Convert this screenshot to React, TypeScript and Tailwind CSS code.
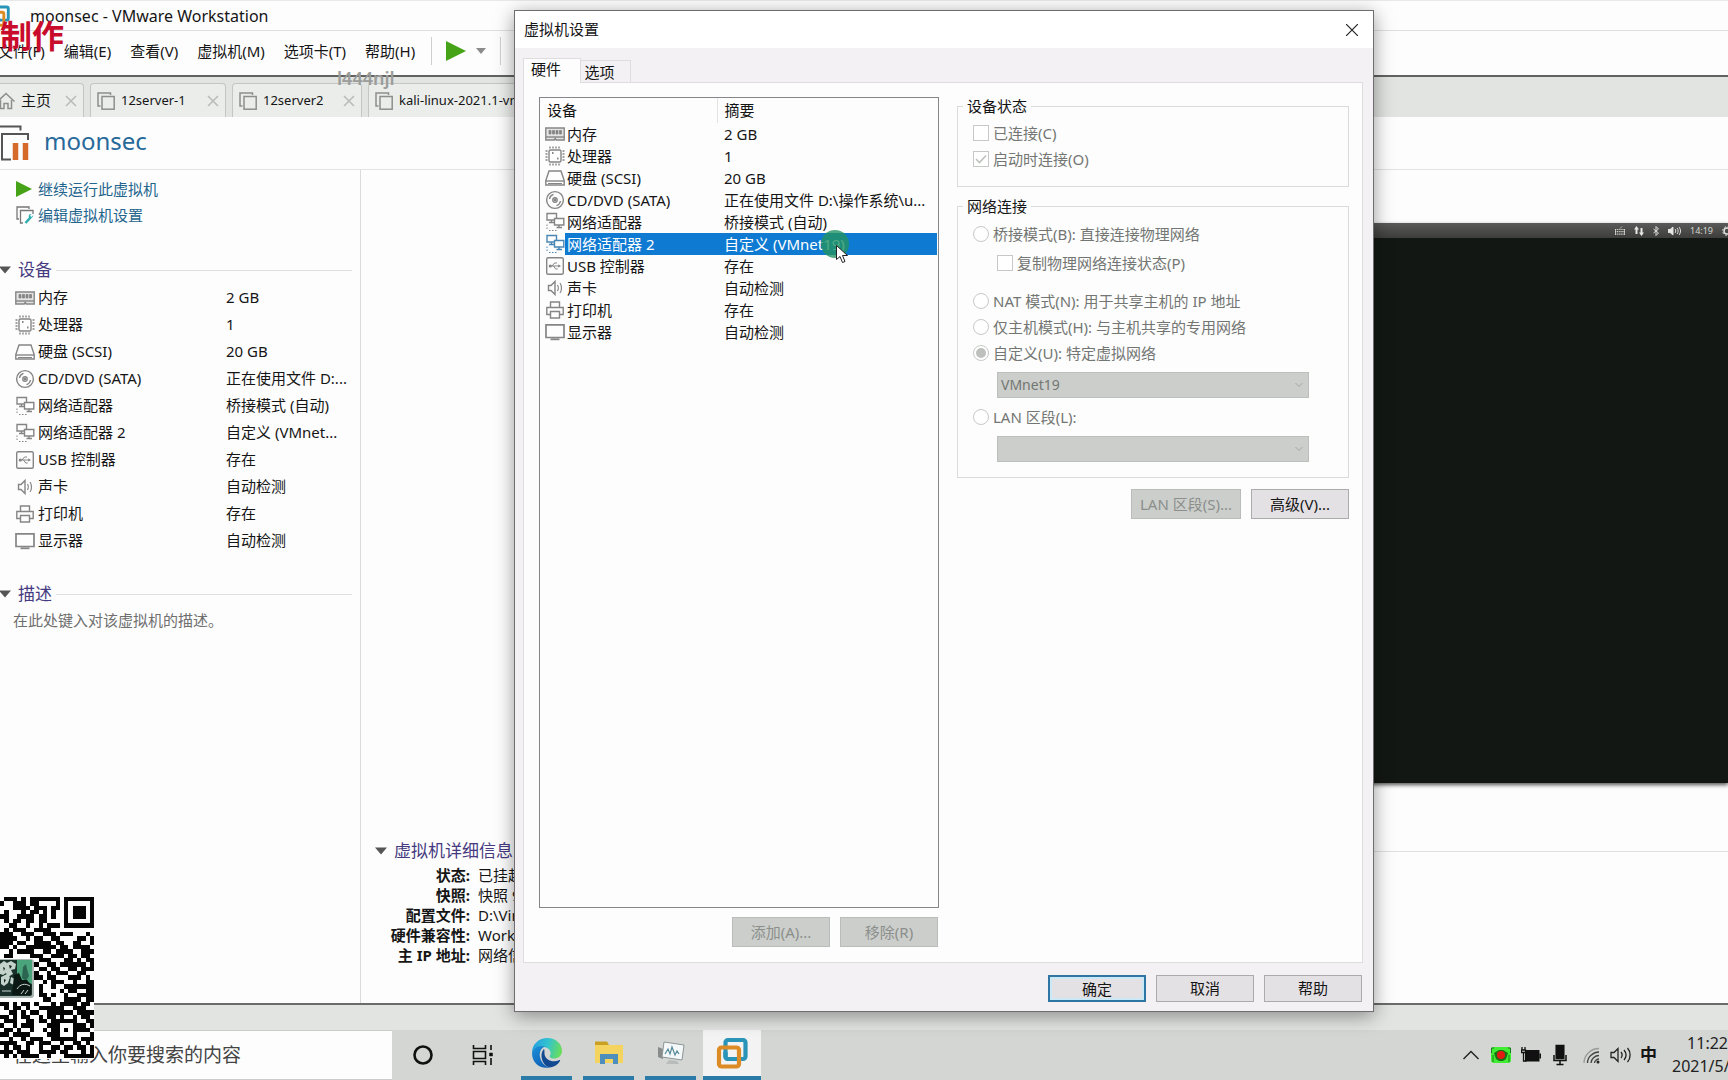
import type { ReactNode } from "react";

const UI = "font-['Noto_Sans','Noto_Sans_CJK_SC',sans-serif]";

type IconName = "memory" | "cpu" | "disk" | "cd" | "net" | "usb" | "sound" | "printer" | "display";

function DeviceIcon({ name, active = false }: { name: IconName; active?: boolean }) {
  const s = active ? "#4a86b4" : "#858585";
  const shapes: Record<IconName, ReactNode> = {
    memory: (
      <>
        <path d="M.8 4h18.4v12h-8l-1-1.5-1 1.5H.8z" fill="#e4e4e4" />
        <path d="M4 6.500h2v3.500H4zM7.500 6.500h2v3.500h-2zM11 6.500h2v3.500h-2zM14.500 6.500h2v3.500h-2z" fill={s} strokeWidth=".8" />
        <path d="M1 13h18" />
      </>
    ),
    cpu: (
      <>
        <rect x="4" y="4" width="12" height="12" rx="1.500" />
        <path d="M5 .5v2M8 .5v2M11 .5v2M14 .5v2M5 17.500v2M8 17.500v2M11 17.500v2M14 17.500v2M.5 5h2M.5 8h2M.5 11h2M.5 14h2M17.500 5h2M17.500 8h2M17.500 11h2M17.500 14h2" />
        <path d="M7 7h1.500M12 12.500h1.500" strokeWidth="2" />
      </>
    ),
    disk: (
      <>
        <path d="M4 3h12l3.200 9.500V17H.8v-4.500z" />
        <path d="M1 13h18" />
        <path d="M3 15.500h14" strokeWidth="1" />
      </>
    ),
    cd: (
      <>
        <circle cx="10" cy="10" r="8.400" />
        <circle cx="10" cy="10" r="2.200" />
        <circle cx="10" cy="10" r=".6" fill={s} />
        <path d="M4.500 9c.4-2.300 1.900-4 4-4.600M15.500 11c-.4 2.300-1.900 4-4 4.600" />
      </>
    ),
    net: (
      <>
        <path d="M2 1.500h9.500v6.500H2zM4 10.500h5M6.500 8v2.500" />
        <path d="M9.500 6.500h9.300v6.500H9.500z" fill="#fff" />
        <path d="M11.500 15.500h5.500M14 13v2.500" />
        <path d="M2 12.500v6M4 18.500h9" strokeDasharray="1.500 1.500" strokeWidth="1" />
      </>
    ),
    usb: (
      <>
        <rect x="1.700" y="1.700" width="16.600" height="16.600" rx="1.500" />
        <path d="M5 10h10M7 10l2.500-3H12M8.500 10l2.200 3h2" strokeWidth="1" />
        <circle cx="5.300" cy="10" r=".9" fill={s} />
        <path d="M13.500 8.800L15.500 10l-2 1.200z" fill={s} strokeWidth=".5" />
      </>
    ),
    sound: (
      <>
        <path d="M3.500 7.500H6L10 3.500v13L6 12.500H3.500z" />
        <path d="M12.500 7c1 1.500 1 4.500 0 6M15 5c2 2.500 2 7.500 0 10" strokeWidth="1.200" />
      </>
    ),
    printer: (
      <>
        <path d="M5.500 7.500V2h9v5.500M5 14.500H1.800v-7h16.400v7H15" />
        <path d="M5.500 11.500h9v6.500h-9z" />
      </>
    ),
    display: (
      <>
        <path d="M1 2.800h18v12.700H1z" strokeWidth="1.700" />
        <path d="M5.500 17.300h9" strokeWidth="1.800" />
      </>
    ),
  };
  return (
    <svg viewBox="0 0 20 20" className="size-5 shrink-0" fill="none" stroke={s} strokeWidth="1.4" aria-hidden="true">
      {shapes[name]}
    </svg>
  );
}

const devices: { icon: IconName; name: string; short: string; full: string }[] = [
  { icon: "memory", name: "内存", short: "2 GB", full: "2 GB" },
  { icon: "cpu", name: "处理器", short: "1", full: "1" },
  { icon: "disk", name: "硬盘 (SCSI)", short: "20 GB", full: "20 GB" },
  { icon: "cd", name: "CD/DVD (SATA)", short: "正在使用文件 D:...", full: "正在使用文件 D:\\操作系统\\u..." },
  { icon: "net", name: "网络适配器", short: "桥接模式 (自动)", full: "桥接模式 (自动)" },
  { icon: "net", name: "网络适配器 2", short: "自定义 (VMnet...", full: "自定义 (VMnet19)" },
  { icon: "usb", name: "USB 控制器", short: "存在", full: "存在" },
  { icon: "sound", name: "声卡", short: "自动检测", full: "自动检测" },
  { icon: "printer", name: "打印机", short: "存在", full: "存在" },
  { icon: "display", name: "显示器", short: "自动检测", full: "自动检测" },
];

function VmwareLogo({ className }: { className: string }) {
  return (
    <svg viewBox="0 0 32 32" className={className} fill="none" strokeWidth="4.200" aria-hidden="true">
      <rect x="9.500" y="3" width="20" height="19" rx="2.500" stroke="#2a93b8" />
      <rect x="3" y="10.500" width="20" height="19" rx="2.500" stroke="#dd8c25" />
      <path d="M9.500 15v4.500a2.500 2.500 0 0 0 2.500 2.500h6" stroke="#2a93b8" />
    </svg>
  );
}

function Caret() {
  return (
    <svg viewBox="0 0 12 8" className="h-2 w-3 shrink-0" aria-hidden="true">
      <path d="M0 .5h12L6 7.500z" fill="#555" />
    </svg>
  );
}

function VmTabIcon() {
  return (
    <svg viewBox="0 0 18 18" className="size-[18px] shrink-0" fill="none" stroke="#8d8f8d" strokeWidth="1.500" aria-hidden="true">
      <path d="M13.500 3V1H1v13h2.500" />
      <rect x="5" y="4.500" width="12.200" height="12.700" />
    </svg>
  );
}

function WindowTab({ label, className, textClass = "text-[13px]", close = true, icon }: { label: string; className: string; textClass?: string; close?: boolean; icon?: ReactNode }) {
  return (
    <div className={`flex h-[34px] shrink-0 items-center rounded-t-sm border border-b-0 border-[#c3c6c3] bg-[#ebedeb] ${className}`}>
      {icon ?? <VmTabIcon />}
      <button type="button" className={`ml-1.5 whitespace-nowrap ${textClass}`}>{label}</button>
      {close && (
        <button type="button" aria-label={`关闭 ${label}`} className="ml-auto">
          <svg viewBox="0 0 12 12" className="size-3" stroke="#b9bbb9" strokeWidth="1.500"><path d="M1 1l10 10M11 1L1 11" /></svg>
        </button>
      )}
    </div>
  );
}

function SectionTitle({ children }: { children: ReactNode }) {
  return (
    <div className="flex h-7 items-center">
      <Caret />
      <h2 className="ml-[7px] text-[17px] whitespace-nowrap text-[#453a80]">{children}</h2>
      <div className="ml-1 h-px flex-1 bg-[#dfe0df]" />
    </div>
  );
}

function DeviceSidebar() {
  return (
    <aside className="flex w-[361px] shrink-0 flex-col border-r border-[#d9dbd9] pt-1.5 text-[15px]">
      <a href="#resume" className="flex h-[26px] items-center pl-4 text-[#24658d]">
        <svg viewBox="0 0 16 16" className="mr-1.5 size-4"><path d="M0 0l16 8-16 8z" fill="#46a317" /></svg>
        继续运行此虚拟机
      </a>
      <a href="#edit" className="flex h-[26px] items-center pl-4 text-[#24658d]">
        <svg viewBox="0 0 18 18" className="mr-1 size-[18px]" fill="none" stroke="#777" strokeWidth="1.300">
          <path d="M13 3V1H1v12h2M7 17H4.500V4.500H17V8" />
          <path d="M9.500 17l5-5.500" stroke="#2eaeb0" strokeWidth="2.600" />
          <path d="M17.500 9l-2 2-1.500-1.500 1.500-1.500c-2-.5-3.500 1.500-2.500 3.500 1.500 1.500 4 .5 4.500-2.500z" fill="#2eaeb0" stroke="none" />
        </svg>
        编辑虚拟机设置
      </a>
      <div className="-ml-px mt-7 pr-2"><SectionTitle>设备</SectionTitle></div>
      <dl>
        {devices.map((d, i) => (
          <div key={i} className="flex h-[27px] items-center pl-[15px]">
            <dt className="flex w-[211px] items-center gap-[3px] whitespace-nowrap"><DeviceIcon name={d.icon} />{d.name}</dt>
            <dd className="whitespace-nowrap">{d.short}</dd>
          </div>
        ))}
      </dl>
      <div className="-ml-px mt-[26px] pr-2"><SectionTitle>描述</SectionTitle></div>
      <p className="pl-[13px] text-[15px]/6 text-[#6f6f6f]">在此处键入对该虚拟机的描述。</p>
    </aside>
  );
}

const details = [
  ["状态:", "已挂起"],
  ["快照:", "快照 9"],
  ["配置文件:", "D:\\Virtual"],
  ["硬件兼容性:", "Workstation"],
  ["主 IP 地址:", "网络信息"],
];

function GuestPreview() {
  return (
    <div className="ml-auto flex h-[560px] w-[360px] flex-col bg-[#131713] shadow-[0_2px_4px_#555]">
      <div className="flex h-[15px] items-center justify-end gap-[9px] overflow-hidden bg-linear-to-b from-[#5a5a5a] to-[#3d3d3b] text-[9px] text-[#d5d5d0]">
        <svg viewBox="0 0 10 9" className="h-[9px] w-[10px]" fill="none" stroke="#d5d5d0" strokeWidth="1.200"><path d="M0 3.500h10M0 5.700h10M0 8.200h10" strokeDasharray="1.300 .8" /><path d="M.5 3v6M9.500 3v6M5 2.500L7 .5" strokeWidth=".8" /></svg>
        <svg viewBox="0 0 10 10" className="size-[10px]" fill="#e8e8e4"><path d="M0 3.500L2.500 0 5 3.500H3.500V8h-2V3.500zM5 6.500L7.500 10 10 6.500H8.500V2h-2v4.500z" /></svg>
        <svg viewBox="0 0 6 10" className="h-[10px] w-[6px]" fill="none" stroke="#e0e0dc"><path d="M.5 3l5 4L3 9.500v-9L5.500 3l-5 4" /></svg>
        <svg viewBox="0 0 13 10" className="h-[10px] w-[13px]" fill="none" stroke="#e0e0dc"><path d="M0 3.500h2L5 1v8L2 6.500H0z" fill="#e8e8e4" /><path d="M7 3c1 1 1 3 0 4M9 2c1.500 2 1.500 4 0 6M11 1c2 2.500 2 5.500 0 8" /></svg>
        <span>14:19</span>
        <svg viewBox="0 0 10 10" className="-mr-1 size-[10px]" fill="none" stroke="#e0e0dc"><circle cx="5" cy="5" r="3" strokeWidth="1.500" /><circle cx="5" cy="5" r="4.400" strokeDasharray="1.500 2" /></svg>
      </div>
    </div>
  );
}

function VmDetails() {
  return (
    <section className="flex min-w-0 flex-1 flex-col overflow-hidden pt-[53px]">
      <GuestPreview />
      <div className="mt-[54px] pl-[14px]"><SectionTitle>虚拟机详细信息</SectionTitle></div>
      <dl className="text-[15px]/5">
        {details.map(([k, v]) => (
          <div key={k} className="flex gap-2">
            <dt className="w-[109px] text-right font-bold whitespace-nowrap">{k}</dt>
            <dd>{v}</dd>
          </div>
        ))}
      </dl>
    </section>
  );
}

const menus = ["文件(F)", "编辑(E)", "查看(V)", "虚拟机(M)", "选项卡(T)", "帮助(H)"];

function Workstation() {
  return (
    <div className="flex flex-1 flex-col bg-[#fdfdfd]">
      <header className="flex h-[31px] items-center border-t border-b border-[#dfe1df] border-t-[#e8e8e8] text-base">
        <VmwareLogo className="-ml-3 size-[22px]" />
        <h1 className="ml-5 text-base">moonsec - VMware Workstation</h1>
      </header>
      <nav className="flex h-[46px] items-center border-b-2 border-[#616361] pb-1 text-[15px]">
        <div className="-ml-0.5 flex gap-[19px]">
          {menus.map((m) => <button type="button" key={m} className="whitespace-nowrap">{m}</button>)}
        </div>
        <div className="ml-4 flex h-7 items-center border-x border-[#cfcfcf] px-[14px]">
          <button type="button" aria-label="运行"><svg viewBox="0 0 20 20" className="size-5"><path d="M0 0l20 10L0 20z" fill="#46a317" /></svg></button>
          <button type="button" aria-label="电源选项" className="ml-2.5"><svg viewBox="0 0 10 6" className="h-1.5 w-2.5"><path d="M0 0h10L5 6z" fill="#8b8b8b" /></svg></button>
        </div>
      </nav>
      <div className="flex h-10 items-end gap-1.5 overflow-hidden bg-[#e1e4e1]">
        <WindowTab
          label="主页"
          className="-ml-1 w-[88px] pr-1.5"
          textClass="text-[15px]"
          icon={<svg viewBox="0 0 18 18" className="size-[18px] shrink-0" fill="none" stroke="#8d8f8d" strokeWidth="1.500"><path d="M.5 9.500L9 1.500l8.500 8M3.500 8v8.500H7v-5h4v5h3.500V8" /></svg>}
        />
        <WindowTab label="12server-1" className="w-[136px] px-1.5" />
        <WindowTab label="12server2" className="w-[130px] px-1.5" />
        <WindowTab label="kali-linux-2021.1-vmware-amd64" className="w-[260px] px-1.5" />
      </div>
      <div className="flex h-[53px] items-center border-b border-[#e2e4e2]">
        <svg viewBox="0 0 30 36" className="h-9 w-[30px]" fill="none" stroke="#555" strokeWidth="2">
          <path d="M0 1.500h20.500v4M11 34.500H2V9h26v6" />
          <path d="M15.500 18v17M25.500 18v17" stroke="#d56a2b" strokeWidth="5.500" />
        </svg>
        <h2 className="ml-3.5 pb-1 text-2xl text-[#27699a]">moonsec</h2>
      </div>
      <div className="flex flex-1 border-b-2 border-[#6a6b6a]">
        <DeviceSidebar />
        <VmDetails />
      </div>
      <footer className="h-[25px] bg-[#e2e4e2]" />
    </div>
  );
}

const dialogButton = "h-[27px] w-[98px] border border-[#ababab] bg-[#e4e1e4] text-[15px] whitespace-nowrap";
const disabledButton = "h-[30px] border border-[#b9bdb9] bg-[#cbcecb] text-[15px] whitespace-nowrap text-[#8b8e8b]";

function Choice({ type, label, checked = false, className }: { type: "radio" | "checkbox"; label: string; checked?: boolean; className: string }) {
  return (
    <label className={`flex items-center gap-1 text-[15px] whitespace-nowrap text-[#737673] ${className}`}>
      <span className="relative flex size-4 shrink-0">
        <input
          type={type}
          name={type === "radio" ? "network" : undefined}
          disabled
          defaultChecked={checked}
          className={`size-4 appearance-none border border-[#c6c9c6] bg-white ${type === "radio" ? "rounded-full" : ""}`}
        />
        {checked && type === "radio" && <span className="absolute inset-[3px] rounded-full bg-[#bdc0bd]" />}
        {checked && type === "checkbox" && (
          <svg viewBox="0 0 16 16" className="absolute inset-0" fill="none" stroke="#bdc0bd" strokeWidth="1.600"><path d="M3 8l3.500 3.500L13 4.500" /></svg>
        )}
      </span>
      {label}
    </label>
  );
}

function DisabledSelect({ label, value }: { label: string; value: string }) {
  return (
    <div className="relative mr-6 ml-6 h-[26px]">
      <select disabled aria-label={label} className="size-full appearance-none border border-[#bcc0bc] bg-[#cbcecb] px-[3px] text-sm text-[#737673] opacity-100">
        <option>{value}</option>
      </select>
      <svg viewBox="0 0 8 6" className="absolute top-2.5 right-1.5 h-1.5 w-2" fill="none" stroke="#a3a6a3"><path d="M.5 1L4 4.500 7.500 1" /></svg>
    </div>
  );
}

function DeviceTable() {
  return (
    <div className="flex-1 border border-[#84868a] bg-[#fdfdfd]">
      <table className="w-full table-fixed text-[15px]">
        <thead>
          <tr className="h-[25px] text-left">
            <th className="w-[177px] border-r border-[#e2e4e2] p-0 pl-[7px] font-normal">设备</th>
            <th className="p-0 pl-[7px] font-normal">摘要</th>
          </tr>
        </thead>
        <tbody>
          {devices.map((d, i) => {
            const active = i === 5;
            return (
              <tr key={i} className={`h-[22px] ${active ? "text-white" : ""}`}>
                <td className="p-0">
                  <div className="flex h-[22px] items-center pl-[5px]">
                    <DeviceIcon name={d.icon} active={active} />
                    <span className={`flex h-[22px] flex-1 items-center pl-0.5 whitespace-nowrap ${active ? "bg-[#0f7ad2]" : ""}`}>{d.name}</span>
                  </div>
                </td>
                <td className="p-0 pr-px">
                  <div className={`relative flex h-[22px] items-center pl-[7px] whitespace-nowrap ${active ? "bg-[#0f7ad2]" : ""}`}>
                    {d.full}
                    {active && (
                      <>
                        <span className="absolute top-[-3px] left-[104px] size-7 rounded-full bg-[#239463]/80" />
                        <svg viewBox="0 0 14 20" className="absolute top-3 left-[119px] h-5 w-3.5"><path d="M.5.5v14l3.500-3 2.500 6 2.500-1-2.500-6h5z" fill="#fff" stroke="#222" /></svg>
                      </>
                    )}
                  </div>
                </td>
              </tr>
            );
          })}
        </tbody>
      </table>
    </div>
  );
}

function Group({ title, className, children }: { title: string; className: string; children: ReactNode }) {
  return (
    <fieldset className={`border border-[#dadcda] px-[15px] ${className}`}>
      <legend className="-ml-2.5 px-1 text-[15px]/5">{title}</legend>
      {children}
    </fieldset>
  );
}

function SettingsDialog() {
  return (
    <div role="dialog" aria-label="虚拟机设置" className="absolute top-2.5 bottom-[68px] left-[514px] flex w-[860px] flex-col border border-[#6f6d70] bg-[#f4f1f4] shadow-[0_4px_18px_rgba(0,0,0,0.4)]">
      <div className="flex h-[37px] shrink-0 items-center bg-white pr-[15px] pl-[9px] text-[15px]">
        <h2>虚拟机设置</h2>
        <button type="button" aria-label="关闭" className="ml-auto"><svg viewBox="0 0 12 12" className="size-3" stroke="#222" strokeWidth="1.200"><path d="M0 0l12 12M12 0L0 12" /></svg></button>
      </div>
      <div role="tablist" className="mt-2.5 flex h-6 items-end pl-2 text-[15px]">
        <button type="button" role="tab" aria-selected="true" className="z-10 -mb-px h-[25px] w-[58px] border border-b-0 border-[#dedcde] bg-[#fdfdfd] pr-3 pb-1 leading-5">硬件</button>
        <button type="button" role="tab" aria-selected="false" className="h-[22px] w-[50px] border border-b-0 border-l-0 border-[#dedcde] pr-3 leading-5">选项</button>
      </div>
      <div className="mr-[10px] ml-2 flex flex-1 border border-[#dedcde] bg-[#fdfdfd] pr-[13px] pl-[15px]">
        <div className="flex w-[400px] shrink-0 flex-col pt-3.5 pb-[15px]">
          <DeviceTable />
          <div className="mt-[9px] flex justify-end gap-2.5 pr-px">
            <button type="button" disabled className={`w-[98px] ${disabledButton}`}>添加(A)...</button>
            <button type="button" disabled className={`w-[98px] ${disabledButton}`}>移除(R)</button>
          </div>
        </div>
        <div className="ml-[18px] flex flex-1 flex-col pt-[13px]">
          <Group title="设备状态" className="h-[91px]">
            <Choice type="checkbox" label="已连接(C)" className="mt-1 h-[26px]" />
            <Choice type="checkbox" label="启动时连接(O)" checked className="h-[26px]" />
          </Group>
          <Group title="网络连接" className="mt-[9px] h-[282px]">
            <Choice type="radio" label="桥接模式(B): 直接连接物理网络" className="mt-[5px] h-[26px]" />
            <Choice type="checkbox" label="复制物理网络连接状态(P)" className="mt-[3px] ml-6 h-[26px]" />
            <Choice type="radio" label="NAT 模式(N): 用于共享主机的 IP 地址" className="mt-3 h-[26px]" />
            <Choice type="radio" label="仅主机模式(H): 与主机共享的专用网络" className="h-[26px]" />
            <Choice type="radio" label="自定义(U): 特定虚拟网络" checked className="mb-1.5 h-[26px]" />
            <DisabledSelect label="自定义网络" value="VMnet19" />
            <Choice type="radio" label="LAN 区段(L):" className="my-1.5 h-[26px]" />
            <DisabledSelect label="LAN 区段" value="" />
          </Group>
          <div className="mt-[11px] flex justify-end gap-2.5">
            <button type="button" disabled className={`w-[110px] ${disabledButton}`}>LAN 区段(S)...</button>
            <button type="button" className="h-[30px] w-[98px] border border-[#ababab] bg-[#e4e1e4] text-[15px]">高级(V)...</button>
          </div>
        </div>
      </div>
      <div className="flex justify-end gap-2.5 pt-3 pr-[11px] pb-[9px]">
        <button type="button" className="h-[27px] w-[98px] border-2 border-[#2f76a5] bg-[#e4e1e4] text-[15px] leading-5 inset-ring-2 inset-ring-[#cbe8f7]">确定</button>
        <button type="button" className={dialogButton}>取消</button>
        <button type="button" className={dialogButton}>帮助</button>
      </div>
    </div>
  );
}

const qrRows = [
  "0111010111111101111111",
  "1001110110000101000001",
  "0001111011101101011101",
  "0100010110101001011101",
  "1100111101101001011101",
  "0101101101100001000001",
  "0011001001011101111111",
  "0101110011110000000000",
  "1110011100111011100010",
  "1111001011001100001101",
  "1110110011110110011001",
  "1101001111111011011110",
  "0010111100110111100111",
  "0110000111001110110110",
  "0000000001110001101011",
  "0000000010011011111101",
  "0000000001101100110111",
  "0000000010010111001100",
  "0000000011011000111010",
  "0000000000101110010011",
  "0000000001001001111111",
  "0000000001000010110011",
  "0000000001101001001111",
  "0000000000110001111011",
  "1101011010001011110110",
  "0101101001111110011100",
  "0011010110011111101111",
  "1101011001011010010110",
  "0111001101101111110011",
  "1001011100011100011101",
  "0110100100101101011110",
  "1101111000011100010001",
  "0010010111001111110111",
  "1111001101110010011010",
  "0101101001001101101101",
  "1110111001111011000101",
  "0101011110010001111111",
];

const qrPath = qrRows
  .map((row, y) => row.split("").map((bit, x) => (bit === "1" ? `M${x} ${y}h1v1h-1z` : "")).join(""))
  .join("");

function QrCode() {
  return (
    <svg viewBox="0 0 94 162" className="pointer-events-none absolute bottom-[21px] left-0 z-20 h-[162px] w-[94px]" role="img" aria-label="QR">
      <rect width="94" height="162" fill="#fff" />
      <g transform="scale(4.28 4.36)"><path d={qrPath} fill="#050505" shapeRendering="crispEdges" /></g>
      <rect x="-4" y="62" width="38" height="39" rx="3" fill="#a9b5b0" />
      <rect x="-4" y="63" width="36" height="36" rx="2" fill="#19302a" />
      <path d="M17 63h15v24l-6-2-4 2-5-8z" fill="#4ba37c" />
      <path d="M23 70l3-3 1 5 2 7-3 5-4-3z" fill="#2b6450" />
      <path d="M0 67l4-3 3 2 4-2 5 3-1 5-4 1 2 4-5 3-2-4-3 2-3-1zM1 80l6-3 3 3-2 6-4 3-3-2zM11 80l4 2-1 6-4-2z" fill="#c3d3cb" />
      <path d="M3 70l2 1-1 3zM9 68l3 1-2 3zM4 82l2 1-2 3z" fill="#10201b" />
      <path d="M14 78l5-2 3 7 5 0 4 5v10H12z" fill="#0a1713" />
      <path d="M17 92c3-5 8-6 13-3M2 94h9M21 97l3-4M25 97l3-4" stroke="#c9d8d0" fill="none" />
    </svg>
  );
}

function TaskButton({ label, children, active = false }: { label: string; children: ReactNode; active?: boolean }) {
  return (
    <button
      type="button"
      aria-label={label}
      className={`flex h-full items-center justify-center border-b-4 border-[#2b7ba8] ${active ? "w-[58px] bg-[#f2f3f2]" : "w-[51px]"}`}
    >
      {children}
    </button>
  );
}

function Taskbar() {
  return (
    <footer className="flex h-[50px] shrink-0 overflow-hidden bg-[#d3d6d3]">
      <input
        type="text"
        aria-label="搜索"
        placeholder="在这里输入你要搜索的内容"
        className="w-[392px] shrink-0 border-y border-[#c9ccc9] bg-[#fdfdfd] pl-[13px] text-[19px] placeholder:text-[#444] placeholder:opacity-100"
      />
      <button type="button" aria-label="Cortana" className="ml-5 w-[22px]"><svg viewBox="0 0 22 22" className="size-[22px]"><circle cx="11" cy="11" r="8.500" fill="none" stroke="#111" strokeWidth="2.600" /></svg></button>
      <button type="button" aria-label="任务视图" className="ml-[38px] w-[22px]">
        <svg viewBox="0 0 22 20" className="h-5 w-[22px]" fill="none" stroke="#111" strokeWidth="1.600"><path d="M1.500 0v3.500h12V0M1.500 20v-3.500h12V20M1.500 6.500h12v7h-12zM19 0v5M19 13v7" /><path d="M17.500 8h3v3h-3z" fill="#111" strokeWidth=".5" /></svg>
      </button>
      <div className="ml-[27px] flex gap-[11px]">
        <TaskButton label="Edge">
          <svg viewBox="0 0 32 32" className="size-8">
            <defs>
              <linearGradient id="edge-top" x1="0" y1=".3" x2="1" y2=".5"><stop stopColor="#259de0" /><stop offset=".5" stopColor="#33c3cf" /><stop offset="1" stopColor="#6ade59" /></linearGradient>
              <linearGradient id="edge-side" x1="0" y1="0" x2=".5" y2="1"><stop stopColor="#1b91d9" /><stop offset="1" stopColor="#1063b8" /></linearGradient>
            </defs>
            <path d="M1 16C1 7 8 1 16.500 1 25 1 31 7 31 14c0 5-4 7.500-8 7.500-3.500 0-5-1.500-4-3 1.500-2.500.5-6.500-4-8C9 8.500 3 11 1 16z" fill="url(#edge-top)" />
            <path d="M1 16c1-5.500 7.500-8.500 13-6.500-4 1.500-6 5.500-5 10.500 1 5.500 5 9.500 10 10.500C9 32.500 1 26 1 16z" fill="url(#edge-side)" />
            <path d="M13 12c-5 5-2 17 6 18.500 4-.5 8-3 10-6.500.5-1-.3-1.200-1-.8-6 3-14-.2-14.500-6.200-.1-2 .2-3.700-.5-5z" fill="#124a91" />
          </svg>
        </TaskButton>
        <TaskButton label="文件资源管理器">
          <svg viewBox="0 0 30 26" className="h-[26px] w-[30px]"><path d="M1 1.500h12l2 3.500H1z" fill="#c9a022" /><path d="M1 5h28v18H1z" fill="#f4d35e" /><path d="M6 14h18v10h-5v-5h-8v5H6z" fill="#4d8ebc" /></svg>
        </TaskButton>
        <TaskButton label="监视器">
          <svg viewBox="0 0 28 26" className="h-[26px] w-7"><path d="M1 7l5 2v10l-5-2z" fill="#888d8c" /><path d="M7 2l20 3-2 15-20-3z" fill="#f5f8f8" stroke="#8c9696" /><path d="M8 14l3-5 2 5 2-7 3 8 2-4 2 3" fill="none" stroke="#558b9a" strokeWidth="1.200" /><path d="M12 20l8 1 2 3H9z" fill="#b8bdbc" /></svg>
        </TaskButton>
        <div className="-ml-1"><TaskButton label="VMware" active><VmwareLogo className="size-8" /></TaskButton></div>
      </div>
      <div className="ml-auto flex shrink-0 items-center">
        <svg viewBox="0 0 16 10" className="h-2.5 w-4" fill="none" stroke="#222" strokeWidth="1.400"><path d="M.5 9L8 1.500 15.500 9" /></svg>
        <svg viewBox="0 0 20 18" className="ml-3 h-[18px] w-5"><rect y="1" width="20" height="16" rx="3" fill="#41ed32" /><path d="M3 2H.5v5M17 2h2.500v5M2 9v7M18 9v7" stroke="#1b7b1c" fill="none" /><path d="M3 7l5-3h4l5 3-2 6-3 2H8l-3-2z" fill="#187215" /><circle cx="10" cy="9" r="4" fill="#e21c12" /></svg>
        <svg viewBox="0 0 20 16" className="ml-2.5 h-4 w-5" fill="none" stroke="#111"><rect x="4.500" y="3.500" width="13.500" height="10.500" fill="#111" /><path d="M19.200 6.500v5" strokeWidth="1.600" /><path d="M1 0v3M4 0v3M.5 3h4v2.500h-4zM2.500 5v9h3" strokeWidth="1.300" /></svg>
        <svg viewBox="0 0 14 22" className="ml-3 h-[22px] w-3.5" fill="none" stroke="#111" strokeWidth="1.500"><rect x="3.200" y="1.500" width="7.600" height="13" fill="#111" /><path d="M1 11v5.500h12V11M7 17v3.500M3.500 20.500h7" /></svg>
        <svg viewBox="0 0 17 17" className="ml-4 size-[17px]" fill="none" stroke="#444" strokeWidth="1.300"><path d="M1 16C1 8 8 1.500 16 1.500" stroke="#999" /><path d="M4.500 16C4.500 10 10 5 16 5M8 16c0-4 4-7.500 8-7.500M11.500 16c0-2 2.500-4 4.500-4" /><circle cx="15" cy="15" r="1.500" fill="#222" stroke="none" /></svg>
        <svg viewBox="0 0 22 18" className="ml-2.5 h-[18px] w-[22px]" fill="none" stroke="#222" strokeWidth="1.300"><path d="M1 6.500h3l4-4v13l-4-4H1zM11 6c1.500 2 1.500 4 0 6M14 4c2.500 3 2.500 7 0 10M17.500 2c3.500 4 3.500 10 0 14" /></svg>
        <span className="ml-2 text-[17px] font-bold">中</span>
        <div className="ml-[15px] w-14 text-right text-base/[23px] whitespace-nowrap text-[#222]">
          <p>11:22</p>
          <p>2021/5/</p>
        </div>
      </div>
    </footer>
  );
}

export default function App() {
  return (
    <main className={`relative flex min-h-screen flex-col overflow-hidden text-[#151515] ${UI}`}>
      <Workstation />
      <SettingsDialog />
      <div className="pointer-events-none absolute top-4 left-0 text-[32px]/10 font-bold text-[#c90c2c]">制作</div>
      <div className="pointer-events-none absolute top-16 left-[337px] text-lg/7 font-semibold text-[#9b9d9b]">l444njl</div>
      <Taskbar />
      <QrCode />
    </main>
  );
}
